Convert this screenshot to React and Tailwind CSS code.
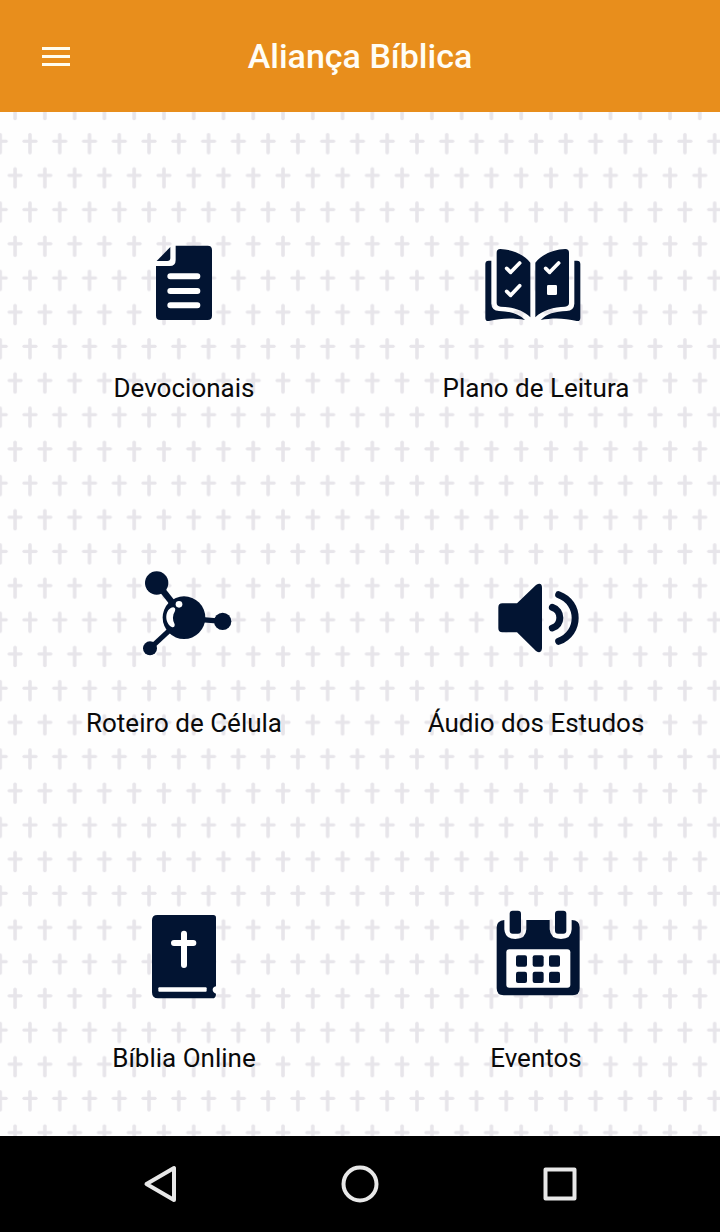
import React from 'react';

const DevotionalIcon = () => (
  <svg viewBox="-36 0 396 330" className="h-[110px] w-[132px]" fill="#021432">
    <path d="M137 47H233Q246 47 246 60V257Q246 270 233 270H91Q78 270 78 257V108H119Q137 108 137 90Z" />
    <path d="M121 51V84Q121 93 112 93H80Z" />
    <path d="M121 139H202M121 183H202M121 226H202" stroke="#fff" strokeWidth="18" strokeLinecap="round" />
  </svg>
);

const ReadingPlanIcon = () => (
  <svg viewBox="0 0 396 330" className="h-[110px] w-[132px]">
    <g fill="#021432">
      <path d="M80 68Q80 57 91 57C125 58 160 72 181 98V262C160 240 125 231 92 230Q80 229 80 219Z" />
      <path d="M297 68Q297 57 286 57C252 58 217 72 196 98V262C217 240 252 231 285 230Q297 229 297 219Z" />
      <path d="M64 92V221Q65 242 87 243C122 244 147 252 165 270C130 263 92 264 57 273Q46 275 46 263V102Q46 92 56 92Z" />
      <path d="M313 92V221Q312 242 290 243C255 244 230 252 212 270C247 263 285 264 320 273Q331 275 331 263V102Q331 92 321 92Z" />
    </g>
    <path
      d="M110 115L122 127L149 99M110 184L122 196L149 167M227 115L239 127L266 99"
      fill="none" stroke="#fff" strokeWidth="11" strokeLinecap="round" strokeLinejoin="round"
    />
    <rect x="231" y="165" width="30" height="30" rx="4" fill="#fff" />
  </svg>
);

const CellIcon = () => (
  <svg viewBox="-36 15 396 330" className="h-[110px] w-[132px]" fill="#021432">
    <path d="M80 69L130 132" stroke="#021432" strokeWidth="19" />
    <path d="M60 265L124 206" stroke="#021432" strokeWidth="15" />
    <path d="M215 179L278 184" stroke="#021432" strokeWidth="16" />
    <circle cx="80" cy="69" r="35" />
    <circle cx="60" cy="265" r="21" />
    <circle cx="278" cy="184" r="26" />
    <circle cx="162" cy="173" r="64" />
    <circle cx="147" cy="133" r="10" fill="#fff" />
    <path d="M130 142C103 145 102 192 127 202Q135 203 134 193C127 180 127 166 135 153Q138 144 130 142Z" fill="#fff" />
  </svg>
);

const AudioIcon = () => (
  <svg viewBox="-30 15 396 330" className="h-[110px] w-[132px]">
    <path d="M67 130H111L168 75Q186 65 186 84V265Q184 283 168 273L111 217H67Q55 217 55 205V142Q55 130 67 130Z" fill="#021432" />
    <path
      d="M217 142C247 151 247 195 217 204M236 104C302 128 302 220 236 244"
      fill="none" stroke="#021432" strokeWidth="21" strokeLinecap="round"
    />
  </svg>
);

const BibleIcon = () => (
  <svg viewBox="-36 0 396 330" className="h-[110px] w-[132px]">
    <path d="M82 45H250Q258 45 258 53V259Q248 262 248 269Q248 277 258 281Q258 295 247 295H84Q66 295 66 277V61Q66 45 82 45Z" fill="#021432" />
    <path d="M162 101V195M132 129H190" stroke="#fff" strokeWidth="18" strokeLinecap="round" />
    <rect x="85" y="262" width="145" height="13" rx="3" fill="#fff" />
  </svg>
);

const EventsIcon = () => (
  <svg viewBox="-30 0 396 330" className="h-[110px] w-[132px]" fill="#021432">
    <path d="M73 60V88Q75 117 106 117Q138 117 139 88V60H209V88Q211 117 243 117Q274 117 275 88V60Q299 61 299 82V265Q299 286 278 286H71Q50 286 50 265V82Q50 62 73 60Z" />
    <rect x="89" y="32" width="34" height="69" rx="9" />
    <rect x="225" y="32" width="34" height="69" rx="9" />
    <rect x="79" y="148" width="192" height="115" rx="9" fill="#fff" />
    <rect x="108" y="166" width="33" height="34" rx="6" />
    <rect x="158" y="166" width="33" height="34" rx="6" />
    <rect x="207" y="166" width="33" height="34" rx="6" />
    <rect x="108" y="215" width="33" height="34" rx="6" />
    <rect x="158" y="215" width="33" height="34" rx="6" />
    <rect x="207" y="215" width="33" height="34" rx="6" />
  </svg>
);

const items = [
  { label: 'Devocionais', Icon: DevotionalIcon },
  { label: 'Plano de Leitura', Icon: ReadingPlanIcon },
  { label: 'Roteiro de Célula', Icon: CellIcon },
  { label: 'Áudio dos Estudos', Icon: AudioIcon },
  { label: 'Bíblia Online', Icon: BibleIcon },
  { label: 'Eventos', Icon: EventsIcon },
];

// staggered rows of small crosses behind the menu
const CrossBackground = () => (
  <svg className="absolute inset-0 h-full w-full" aria-hidden="true">
    <defs>
      <g id="cross" stroke="#e7e5ea" strokeLinecap="round">
        <path d="M0 -6.5V11.5" strokeWidth="3.6" />
        <path d="M-6 0H6" strokeWidth="3.2" />
      </g>
      <pattern id="crosses" x="0.2" y="14" width="29.77" height="68.37" patternUnits="userSpaceOnUse">
        <use href="#cross" x="0" y="15.2" />
        <use href="#cross" x="29.77" y="15.2" />
        <use href="#cross" x="14.9" y="49.4" />
      </pattern>
    </defs>
    <rect width="100%" height="100%" fill="url(#crosses)" />
  </svg>
);

const App = () => {
  return (
    <div className="flex h-[1232px] w-[720px] flex-col font-['Roboto',sans-serif]">
      <header className="grid h-28 grid-cols-[112px_1fr_112px] items-center bg-[#e88e1c]">
        <button className="flex h-full flex-col items-center justify-center gap-[5px]" aria-label="Menu">
          <span className="h-[3px] w-7 bg-[#fffdf0]"></span>
          <span className="h-[3px] w-7 bg-[#fffdf0]"></span>
          <span className="h-[3px] w-7 bg-[#fffdf0]"></span>
        </button>
        <h1 className="text-center text-[34px] font-medium leading-none text-[#fffdf5]">Aliança Bíblica</h1>
      </header>

      <main className="relative h-[1024px] overflow-hidden bg-[#fefefe]">
        <CrossBackground />
        <div className="relative grid grid-cols-2 px-2 pt-[118px]">
          {items.map(({ label, Icon }) => (
            <button key={label} className="flex h-[335px] flex-col items-center">
              <Icon />
              <span className="mt-8 text-[26px] leading-8 text-[#0a0a0a]">{label}</span>
            </button>
          ))}
        </div>
      </main>

      <nav className="flex h-24 items-center justify-center bg-black">
        <button className="flex w-[200px] justify-center" aria-label="Back">
          <svg width="48" height="48" fill="none" stroke="#e8e8e8" strokeWidth="4" strokeLinejoin="round">
            <path d="M38 8V40L10.5 24Z" />
          </svg>
        </button>
        <button className="flex w-[200px] justify-center" aria-label="Home">
          <svg width="48" height="48" fill="none" stroke="#e8e8e8" strokeWidth="4">
            <circle cx="24" cy="24" r="16.5" />
          </svg>
        </button>
        <button className="flex w-[200px] justify-center" aria-label="Recent apps">
          <svg width="48" height="48" fill="none" stroke="#e8e8e8" strokeWidth="4" strokeLinejoin="round">
            <rect x="9.5" y="9.5" width="29" height="29" />
          </svg>
        </button>
      </nav>
    </div>
  );
};

export default App;
